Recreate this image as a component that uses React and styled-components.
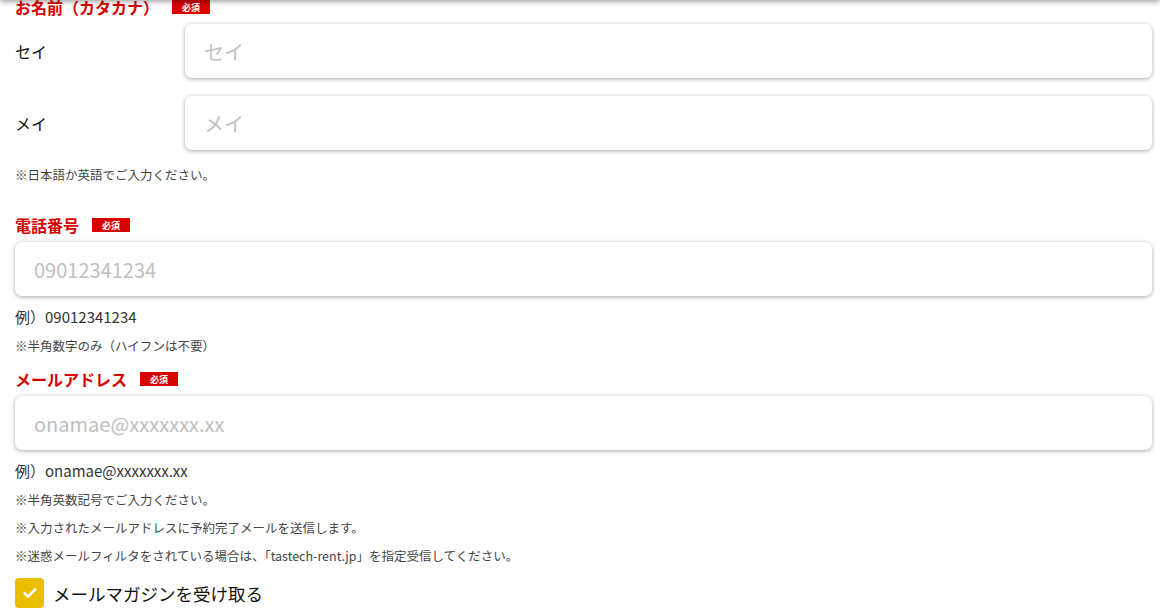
import styled, { createGlobalStyle } from "styled-components"

const GlobalStyle = createGlobalStyle`
  body {
    margin: 0;
    background: #fff;
    font-family: "Noto Sans CJK JP", "Noto Sans", sans-serif;
    color: #222;
  }
`

const HeaderShadow = styled.div`
  position: fixed;
  top: -10px;
  left: 0;
  right: 0;
  height: 10px;
  background: #fff;
  box-shadow: 0 1px 6px rgba(0, 0, 0, 0.45);
  z-index: 10;
`

const Form = styled.div`
  margin-top: -5px;
  padding: 0 8px 20px 15px;
`

const Section = styled.div`
  margin-top: ${props => props.gap || 0}px;
`

const Heading = styled.div`
  display: flex;
  align-items: center;
  height: 24px;
  margin-bottom: 5px;
  font-size: 16px;
  font-weight: 700;
  color: #d90000;
`

const Badge = styled.span`
  display: inline-flex;
  align-items: center;
  justify-content: center;
  width: 38px;
  height: 14px;
  margin-left: 13px;
  background: #d90000;
  color: #fff;
  font-size: 9px;
  font-weight: 700;
  line-height: 1;
`

const NameRow = styled.div`
  display: grid;
  grid-template-columns: 170px 1fr;
  align-items: center;
  margin-top: ${props => props.gap || 0}px;
`

const Label = styled.div`
  font-size: 16px;
  color: #111;
`

const Input = styled.input`
  box-sizing: border-box;
  width: 100%;
  height: 54px;
  padding: 0 19px;
  border: none;
  border-radius: 7px;
  background: #fff;
  box-shadow: 0 1px 4px rgba(0, 0, 0, 0.35);
  font-family: inherit;
  font-size: 20px;
  color: #333;
  outline: none;
  &::placeholder {
    color: #c0c0c0;
  }
`

const Example = styled.div`
  margin-top: 6px;
  font-size: 15px;
  line-height: 30px;
  color: #333;
`

const Note = styled.div`
  margin-top: ${props => props.gap || 0}px;
  font-size: 12.5px;
  line-height: 28px;
  color: #444;
`

const CheckRow = styled.label`
  display: flex;
  align-items: center;
  margin-top: 8px;
  font-size: 17.5px;
  color: #111;
  gap: 9px;
`

const CheckBox = styled.span`
  display: inline-flex;
  align-items: center;
  justify-content: center;
  width: 29px;
  height: 30px;
  border-radius: 4px;
  background: #ebbe00;
`

const App = () => {
  return (
    <>
      <GlobalStyle />
      <HeaderShadow />
      <Form>
        <Section>
          <Heading>
            お名前（カタカナ）<Badge>必須</Badge>
          </Heading>
          <NameRow>
            <Label>セイ</Label>
            <Input placeholder="セイ" />
          </NameRow>
          <NameRow gap={18}>
            <Label>メイ</Label>
            <Input placeholder="メイ" />
          </NameRow>
          <Note gap={11}>※日本語か英語でご入力ください。</Note>
        </Section>

        <Section gap={24}>
          <Heading>
            電話番号<Badge>必須</Badge>
          </Heading>
          <Input placeholder="09012341234" />
          <Example>例）09012341234</Example>
          <Note>※半角数字のみ（ハイフンは不要）</Note>
        </Section>

        <Section gap={7}>
          <Heading>
            メールアドレス<Badge>必須</Badge>
          </Heading>
          <Input placeholder="onamae@xxxxxxx.xx" />
          <Example>例）onamae@xxxxxxx.xx</Example>
          <Note>※半角英数記号でご入力ください。</Note>
          <Note>※入力されたメールアドレスに予約完了メールを送信します。</Note>
          <Note>※迷惑メールフィルタをされている場合は、「tastech-rent.jp」を指定受信してください。</Note>
          <CheckRow>
            <CheckBox>
              <svg width="16" height="16" viewBox="0 0 24 24" fill="none" stroke="#fff" strokeWidth="4" strokeLinecap="round" strokeLinejoin="round">
                <path d="M4 12.5l5 5L20 6.5" />
              </svg>
            </CheckBox>
            メールマガジンを受け取る
          </CheckRow>
        </Section>
      </Form>
    </>
  )
}

export default App
